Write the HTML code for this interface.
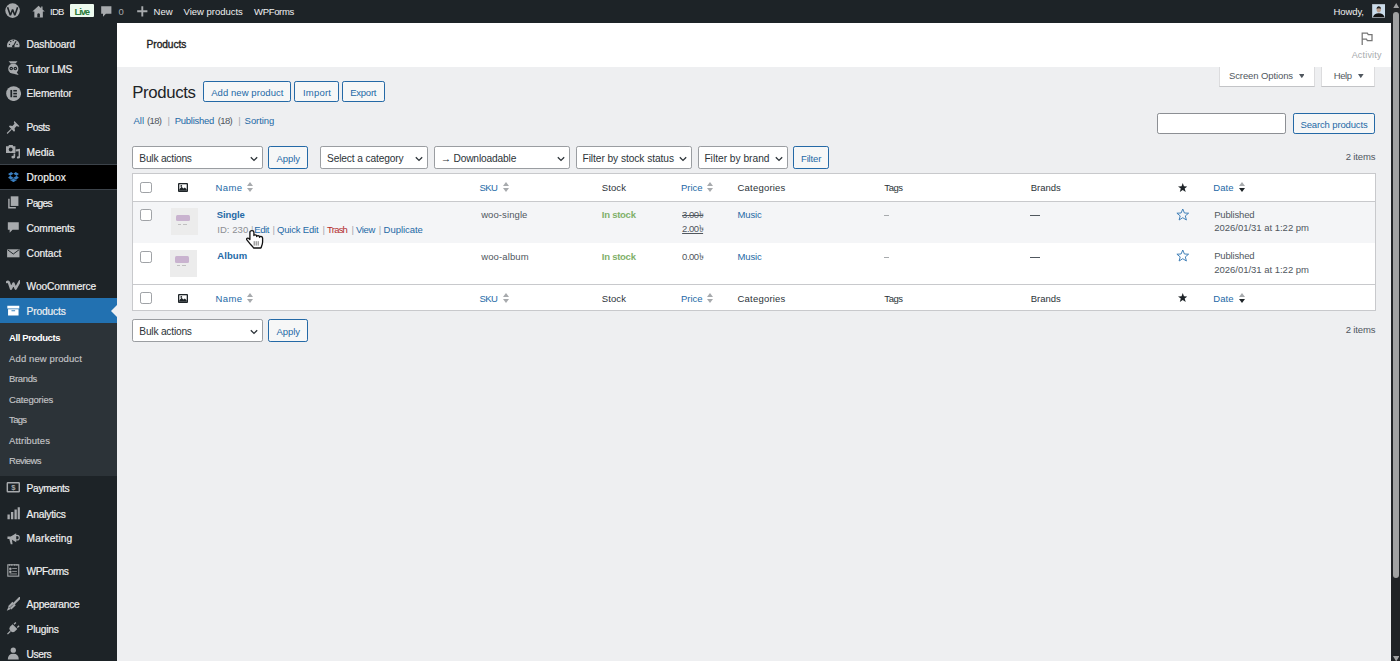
<!DOCTYPE html><html><head><meta charset="utf-8"><style>
html,body{margin:0;padding:0;}
body{width:1400px;height:661px;overflow:hidden;position:relative;background:#eeeff1;font-family:"Liberation Sans",sans-serif;}
.t{position:absolute;white-space:nowrap;}
.b{position:absolute;box-sizing:border-box;}
</style></head><body>
<div class="b" style="left:0px;top:0px;width:1391.00px;height:22.50px;background:#1d2327"></div>
<div class="b" style="left:0px;top:22px;width:116.70px;height:639.00px;background:#1d2327"></div>
<div class="b" style="left:0px;top:164px;width:116.70px;height:25.50px;background:#000;border-top:1px solid #3c434a;border-bottom:1px solid #3c434a"></div>
<div class="b" style="left:0px;top:298.4px;width:116.70px;height:24.30px;background:#2271b1"></div>
<div class="b" style="left:0px;top:322.7px;width:116.70px;height:153.00px;background:#2c3338"></div>
<div class="b" style="left:116.7px;top:22.5px;width:1274.30px;height:44.00px;background:#fff"></div>
<div class="b" style="left:1391px;top:0px;width:9.00px;height:661.00px;background:#202326"></div>
<div class="b" style="left:1392.7px;top:12px;width:6.40px;height:565.60px;background:#a0a1a2;border-radius:3.2px"></div>
<svg class="b" style="left:1392.7px;top:2.7px" width="6.4" height="5.5" viewBox="0 0 6.4 5.5"><path d="M3.2 0 L6.4 5.5 H0Z" fill="#a0a1a2"/></svg>
<svg class="b" style="left:1392.7px;top:655.5px" width="6.4" height="5.5" viewBox="0 0 6.4 5.5"><path d="M0 0 H6.4 L3.2 5.5Z" fill="#a0a1a2"/></svg>
<div class="t" style="left:50.00px;top:6.96px;font-size:9.5px;line-height:9.5px;color:#f0f0f1;letter-spacing:-0.759px;">IDB</div>
<div class="b" style="left:70px;top:4.3px;width:23.90px;height:13.20px;background:#edfaef;border-radius:1px"></div>
<div class="t" style="left:74.60px;top:6.96px;font-size:9.5px;line-height:9.5px;color:#2a7b3b;font-weight:700;letter-spacing:-1.200px;">Live</div>
<div class="t" style="left:118.60px;top:6.96px;font-size:9.5px;line-height:9.5px;color:#a7aaad;">0</div>
<div class="t" style="left:153.60px;top:6.96px;font-size:9.5px;line-height:9.5px;color:#f0f0f1;letter-spacing:-0.024px;">New</div>
<div class="t" style="left:183.60px;top:6.96px;font-size:9.5px;line-height:9.5px;color:#f0f0f1;letter-spacing:-0.018px;">View products</div>
<div class="t" style="left:254.00px;top:6.96px;font-size:9.5px;line-height:9.5px;color:#f0f0f1;letter-spacing:-0.321px;">WPForms</div>
<div class="t" style="left:1333.50px;top:6.96px;font-size:9.5px;line-height:9.5px;color:#f0f0f1;letter-spacing:-0.094px;">Howdy,</div>
<svg class="b" style="left:1371.5px;top:4.2px" width="13.5" height="13.5" viewBox="0 0 13.5 13.5"><rect x="0" y="0" width="13.5" height="13.5" fill="#c9dbea" stroke="#8c8f94" stroke-width="0.8"/><path d="M1 13 Q2 9.5 6.75 9.3 Q11.5 9.5 12.5 13Z" fill="#111"/><ellipse cx="6.75" cy="5.6" rx="2.2" ry="2.8" fill="#b89a88"/><path d="M4.5 4.8 Q4.6 2.2 6.75 2.3 Q9 2.2 9 4.8 Q7 3.6 4.5 4.8Z" fill="#222"/></svg>
<div class="t" style="left:26.60px;top:40.17px;font-size:10.2px;line-height:10.2px;color:#f0f0f1;letter-spacing:-0.147px;-webkit-text-stroke:0.2px #f0f0f1">Dashboard</div>
<div class="t" style="left:26.60px;top:64.67px;font-size:10.2px;line-height:10.2px;color:#f0f0f1;letter-spacing:-0.178px;-webkit-text-stroke:0.2px #f0f0f1">Tutor LMS</div>
<div class="t" style="left:26.60px;top:89.07px;font-size:10.2px;line-height:10.2px;color:#f0f0f1;letter-spacing:-0.139px;-webkit-text-stroke:0.2px #f0f0f1">Elementor</div>
<div class="t" style="left:26.60px;top:123.17px;font-size:10.2px;line-height:10.2px;color:#f0f0f1;letter-spacing:-0.525px;-webkit-text-stroke:0.2px #f0f0f1">Posts</div>
<div class="t" style="left:26.60px;top:147.87px;font-size:10.2px;line-height:10.2px;color:#f0f0f1;letter-spacing:-0.037px;-webkit-text-stroke:0.2px #f0f0f1">Media</div>
<div class="t" style="left:26.60px;top:172.97px;font-size:10.2px;line-height:10.2px;color:#f0f0f1;letter-spacing:0.107px;-webkit-text-stroke:0.2px #f0f0f1">Dropbox</div>
<div class="t" style="left:26.60px;top:199.27px;font-size:10.2px;line-height:10.2px;color:#f0f0f1;letter-spacing:-0.729px;-webkit-text-stroke:0.2px #f0f0f1">Pages</div>
<div class="t" style="left:26.60px;top:223.77px;font-size:10.2px;line-height:10.2px;color:#f0f0f1;letter-spacing:-0.145px;-webkit-text-stroke:0.2px #f0f0f1">Comments</div>
<div class="t" style="left:26.60px;top:249.17px;font-size:10.2px;line-height:10.2px;color:#f0f0f1;letter-spacing:-0.073px;-webkit-text-stroke:0.2px #f0f0f1">Contact</div>
<div class="t" style="left:26.60px;top:282.07px;font-size:10.2px;line-height:10.2px;color:#f0f0f1;letter-spacing:-0.089px;-webkit-text-stroke:0.2px #f0f0f1">WooCommerce</div>
<div class="t" style="left:26.60px;top:307.07px;font-size:10.2px;line-height:10.2px;color:#f0f0f1;letter-spacing:-0.148px;-webkit-text-stroke:0.2px #f0f0f1">Products</div>
<div class="t" style="left:26.60px;top:483.77px;font-size:10.2px;line-height:10.2px;color:#f0f0f1;letter-spacing:-0.334px;-webkit-text-stroke:0.2px #f0f0f1">Payments</div>
<div class="t" style="left:26.60px;top:509.87px;font-size:10.2px;line-height:10.2px;color:#f0f0f1;letter-spacing:-0.175px;-webkit-text-stroke:0.2px #f0f0f1">Analytics</div>
<div class="t" style="left:26.60px;top:534.47px;font-size:10.2px;line-height:10.2px;color:#f0f0f1;letter-spacing:0.115px;-webkit-text-stroke:0.2px #f0f0f1">Marketing</div>
<div class="t" style="left:26.60px;top:567.07px;font-size:10.2px;line-height:10.2px;color:#f0f0f1;letter-spacing:-0.490px;-webkit-text-stroke:0.2px #f0f0f1">WPForms</div>
<div class="t" style="left:26.60px;top:599.77px;font-size:10.2px;line-height:10.2px;color:#f0f0f1;letter-spacing:-0.203px;-webkit-text-stroke:0.2px #f0f0f1">Appearance</div>
<div class="t" style="left:26.60px;top:624.87px;font-size:10.2px;line-height:10.2px;color:#f0f0f1;letter-spacing:-0.176px;-webkit-text-stroke:0.2px #f0f0f1">Plugins</div>
<div class="t" style="left:26.60px;top:649.97px;font-size:10.2px;line-height:10.2px;color:#f0f0f1;letter-spacing:-0.431px;-webkit-text-stroke:0.2px #f0f0f1">Users</div>
<div class="t" style="left:9.10px;top:333.46px;font-size:9.5px;line-height:9.5px;color:#fff;font-weight:700;letter-spacing:-0.414px;">All Products</div>
<div class="t" style="left:9.10px;top:353.76px;font-size:9.5px;line-height:9.5px;color:#c3c4c7;letter-spacing:0.100px;-webkit-text-stroke:0.15px #c3c4c7">Add new product</div>
<div class="t" style="left:9.10px;top:374.26px;font-size:9.5px;line-height:9.5px;color:#c3c4c7;letter-spacing:-0.383px;-webkit-text-stroke:0.15px #c3c4c7">Brands</div>
<div class="t" style="left:9.10px;top:394.96px;font-size:9.5px;line-height:9.5px;color:#c3c4c7;letter-spacing:-0.193px;-webkit-text-stroke:0.15px #c3c4c7">Categories</div>
<div class="t" style="left:9.10px;top:415.26px;font-size:9.5px;line-height:9.5px;color:#c3c4c7;letter-spacing:-0.715px;-webkit-text-stroke:0.15px #c3c4c7">Tags</div>
<div class="t" style="left:9.10px;top:436.06px;font-size:9.5px;line-height:9.5px;color:#c3c4c7;letter-spacing:0.074px;-webkit-text-stroke:0.15px #c3c4c7">Attributes</div>
<div class="t" style="left:9.10px;top:455.96px;font-size:9.5px;line-height:9.5px;color:#c3c4c7;letter-spacing:-0.568px;-webkit-text-stroke:0.15px #c3c4c7">Reviews</div>
<svg class="b" style="left:110.7px;top:304.5px" width="6" height="12" viewBox="0 0 6 12"><path d="M6 0 L0 6 L6 12 Z" fill="#eeeff1"/></svg>
<div class="t" style="left:146.60px;top:40.37px;font-size:10.2px;line-height:10.2px;color:#1e1e1e;letter-spacing:-0.077px;-webkit-text-stroke:0.35px #1e1e1e">Products</div>
<div class="t" style="left:1351.70px;top:50.98px;font-size:9px;line-height:9px;color:#a7aaad;letter-spacing:0.174px;">Activity</div>
<div class="b" style="left:1218.8px;top:66.5px;width:96.10px;height:20.90px;background:#fff;border:1px solid #dcdcde;border-top:0;border-bottom-color:#c3c4c7"></div>
<div class="b" style="left:1321.4px;top:66.5px;width:54.10px;height:20.90px;background:#fff;border:1px solid #dcdcde;border-top:0;border-bottom-color:#c3c4c7"></div>
<div class="t" style="left:1229.00px;top:71.46px;font-size:9.5px;line-height:9.5px;color:#50575e;letter-spacing:-0.108px;">Screen Options</div>
<div class="t" style="left:1333.70px;top:71.46px;font-size:9.5px;line-height:9.5px;color:#50575e;letter-spacing:-0.408px;">Help</div>
<div class="t" style="left:132.30px;top:84.78px;font-size:16.8px;line-height:16.8px;color:#1d2327;letter-spacing:-0.368px;">Products</div>
<div class="b" style="left:203.3px;top:81.2px;width:87.80px;height:21.30px;background:#f6f7f7;border:1px solid #2469a6;border-radius:2.2px"></div>
<div class="b" style="left:294.3px;top:81.2px;width:44.50px;height:21.30px;background:#f6f7f7;border:1px solid #2469a6;border-radius:2.2px"></div>
<div class="b" style="left:342px;top:81.2px;width:42.80px;height:21.30px;background:#f6f7f7;border:1px solid #2469a6;border-radius:2.2px"></div>
<div class="t" style="left:211.20px;top:87.66px;font-size:9.5px;line-height:9.5px;color:#2469a6;letter-spacing:0.072px;">Add new product</div>
<div class="t" style="left:303.00px;top:87.66px;font-size:9.5px;line-height:9.5px;color:#2469a6;letter-spacing:0.213px;">Import</div>
<div class="t" style="left:350.20px;top:87.66px;font-size:9.5px;line-height:9.5px;color:#2469a6;letter-spacing:-0.231px;">Export</div>
<div class="t" style="left:133.50px;top:115.56px;font-size:9.5px;line-height:9.5px;color:#2469a6;letter-spacing:-0.022px;">All</div>
<div class="t" style="left:146.90px;top:115.56px;font-size:9.5px;line-height:9.5px;color:#50575e;letter-spacing:-0.603px;">(18)</div>
<div class="t" style="left:167.60px;top:115.56px;font-size:9.5px;line-height:9.5px;color:#a7aaad;">|</div>
<div class="t" style="left:174.80px;top:115.56px;font-size:9.5px;line-height:9.5px;color:#2469a6;letter-spacing:-0.276px;">Published</div>
<div class="t" style="left:217.70px;top:115.56px;font-size:9.5px;line-height:9.5px;color:#50575e;letter-spacing:-0.603px;">(18)</div>
<div class="t" style="left:238.30px;top:115.56px;font-size:9.5px;line-height:9.5px;color:#a7aaad;">|</div>
<div class="t" style="left:244.60px;top:115.56px;font-size:9.5px;line-height:9.5px;color:#2469a6;letter-spacing:-0.052px;">Sorting</div>
<div class="b" style="left:1157.2px;top:113.2px;width:128.60px;height:21.30px;background:#fff;border:1px solid #8c8f94;border-radius:2.2px"></div>
<div class="b" style="left:1292.6px;top:113.2px;width:82.80px;height:21.30px;background:#f6f7f7;border:1px solid #2469a6;border-radius:2.2px"></div>
<div class="t" style="left:1300.50px;top:119.56px;font-size:9.5px;line-height:9.5px;color:#2469a6;letter-spacing:-0.140px;">Search products</div>
<div class="b" style="left:132.4px;top:146.4px;width:130.90px;height:22.90px;background:#fff;border:1px solid #9a9da1;border-radius:2.2px"></div>
<div class="t" style="left:139.30px;top:153.97px;font-size:10.2px;line-height:10.2px;color:#2c3338;letter-spacing:-0.207px;">Bulk actions</div>
<svg class="b" style="left:249.5px;top:156.05px" width="8" height="6" viewBox="0 0 8 6"><path d="M0.8 1.2 L4 4.4 L7.2 1.2" fill="none" stroke="#2c3338" stroke-width="1.3"/></svg>
<div class="b" style="left:268.1px;top:146.4px;width:39.80px;height:22.90px;background:#f6f7f7;border:1px solid #2469a6;border-radius:2.2px"></div>
<div class="t" style="left:276.40px;top:153.86px;font-size:9.5px;line-height:9.5px;color:#2469a6;letter-spacing:-0.037px;">Apply</div>
<div class="b" style="left:320.4px;top:146.4px;width:108.00px;height:22.90px;background:#fff;border:1px solid #9a9da1;border-radius:2.2px"></div>
<div class="t" style="left:327.00px;top:153.97px;font-size:10.2px;line-height:10.2px;color:#2c3338;letter-spacing:-0.131px;">Select a category</div>
<svg class="b" style="left:414.8px;top:156.05px" width="8" height="6" viewBox="0 0 8 6"><path d="M0.8 1.2 L4 4.4 L7.2 1.2" fill="none" stroke="#2c3338" stroke-width="1.3"/></svg>
<div class="b" style="left:433.6px;top:146.4px;width:136.90px;height:22.90px;background:#fff;border:1px solid #9a9da1;border-radius:2.2px"></div>
<div class="t" style="left:440.70px;top:153.97px;font-size:10.2px;line-height:10.2px;color:#2c3338;letter-spacing:-0.144px;">→ Downloadable</div>
<svg class="b" style="left:556.8px;top:156.05px" width="8" height="6" viewBox="0 0 8 6"><path d="M0.8 1.2 L4 4.4 L7.2 1.2" fill="none" stroke="#2c3338" stroke-width="1.3"/></svg>
<div class="b" style="left:576.4px;top:146.4px;width:116.10px;height:22.90px;background:#fff;border:1px solid #9a9da1;border-radius:2.2px"></div>
<div class="t" style="left:582.50px;top:153.97px;font-size:10.2px;line-height:10.2px;color:#2c3338;letter-spacing:-0.065px;">Filter by stock status</div>
<svg class="b" style="left:679.2px;top:156.05px" width="8" height="6" viewBox="0 0 8 6"><path d="M0.8 1.2 L4 4.4 L7.2 1.2" fill="none" stroke="#2c3338" stroke-width="1.3"/></svg>
<div class="b" style="left:698.3px;top:146.4px;width:89.70px;height:22.90px;background:#fff;border:1px solid #9a9da1;border-radius:2.2px"></div>
<div class="t" style="left:704.40px;top:153.97px;font-size:10.2px;line-height:10.2px;color:#2c3338;">Filter by brand</div>
<svg class="b" style="left:774.6px;top:156.05px" width="8" height="6" viewBox="0 0 8 6"><path d="M0.8 1.2 L4 4.4 L7.2 1.2" fill="none" stroke="#2c3338" stroke-width="1.3"/></svg>
<div class="b" style="left:792.8px;top:146.4px;width:36.20px;height:22.90px;background:#f6f7f7;border:1px solid #2469a6;border-radius:2.2px"></div>
<div class="t" style="left:801.00px;top:153.86px;font-size:9.5px;line-height:9.5px;color:#2469a6;letter-spacing:-0.158px;">Filter</div>
<div class="t" style="left:1345.80px;top:152.16px;font-size:9.5px;line-height:9.5px;color:#50575e;letter-spacing:-0.173px;">2 items</div>
<div class="b" style="left:132px;top:173.3px;width:1243.50px;height:138.20px;background:#fff;border:1px solid #c8c9cc"></div>
<div class="b" style="left:132px;top:200.5px;width:1243.50px;height:1.00px;background:#c8c9cc"></div>
<div class="b" style="left:133px;top:201.5px;width:1241.50px;height:41.30px;background:#f4f5f7"></div>
<div class="b" style="left:132px;top:284.2px;width:1243.50px;height:1.00px;background:#c8c9cc"></div>
<div class="b" style="left:140.3px;top:181.6px;width:11.70px;height:11.70px;background:#fff;border:1px solid #9fa2a6;border-radius:2.2px"></div>
<svg class="b" style="left:178px;top:183px" width="10" height="9" viewBox="0 0 10 9"><rect x="0" y="0" width="10" height="9" rx="1" fill="#1d2327"/><rect x="1.3" y="1.3" width="7.4" height="6.4" fill="#fff"/><path d="M1.3 7.7 V6.2 L3.6 3.8 L5.4 5.6 L6.8 4.4 L8.7 6.2 V7.7Z" fill="#1d2327"/><circle cx="3.3" cy="2.9" r="0.9" fill="#1d2327"/></svg>
<div class="t" style="left:215.50px;top:182.96px;font-size:9.5px;line-height:9.5px;color:#2469a6;letter-spacing:0.378px;">Name</div>
<svg class="b" style="left:246.8px;top:182px" width="6" height="10" viewBox="0 0 6 10"><path d="M3 0 L6 4 L0 4Z" fill="#a7aaad"/><path d="M0 6 L6 6 L3 10Z" fill="#a7aaad"/></svg>
<div class="t" style="left:479.60px;top:182.96px;font-size:9.5px;line-height:9.5px;color:#2469a6;letter-spacing:-0.611px;">SKU</div>
<svg class="b" style="left:503px;top:182px" width="6" height="10" viewBox="0 0 6 10"><path d="M3 0 L6 4 L0 4Z" fill="#a7aaad"/><path d="M0 6 L6 6 L3 10Z" fill="#a7aaad"/></svg>
<div class="t" style="left:601.80px;top:182.96px;font-size:9.5px;line-height:9.5px;color:#2c3338;letter-spacing:0.101px;">Stock</div>
<div class="t" style="left:681.00px;top:182.96px;font-size:9.5px;line-height:9.5px;color:#2469a6;letter-spacing:-0.040px;">Price</div>
<svg class="b" style="left:706.5px;top:182px" width="6" height="10" viewBox="0 0 6 10"><path d="M3 0 L6 4 L0 4Z" fill="#a7aaad"/><path d="M0 6 L6 6 L3 10Z" fill="#a7aaad"/></svg>
<div class="t" style="left:737.50px;top:182.96px;font-size:9.5px;line-height:9.5px;color:#2c3338;letter-spacing:0.207px;">Categories</div>
<div class="t" style="left:884.30px;top:182.96px;font-size:9.5px;line-height:9.5px;color:#2c3338;letter-spacing:-0.415px;">Tags</div>
<div class="t" style="left:1030.70px;top:182.96px;font-size:9.5px;line-height:9.5px;color:#2c3338;letter-spacing:-0.023px;">Brands</div>
<svg class="b" style="left:1177.5px;top:182.5px" width="9.5" height="9" viewBox="0 0 9.5 9"><path d="M4.75 0 L5.95 3.3 L9.5 3.4 L6.7 5.6 L7.7 9 L4.75 7 L1.8 9 L2.8 5.6 L0 3.4 L3.55 3.3Z" fill="#1d2327"/></svg>
<div class="t" style="left:1213.30px;top:182.96px;font-size:9.5px;line-height:9.5px;color:#2469a6;letter-spacing:0.085px;">Date</div>
<svg class="b" style="left:1238.5px;top:182px" width="6" height="10" viewBox="0 0 6 10"><path d="M3 0 L6 4 L0 4Z" fill="#a7aaad"/><path d="M0 6 L6 6 L3 10Z" fill="#1d2327"/></svg>
<div class="b" style="left:140.3px;top:292.4px;width:11.70px;height:11.70px;background:#fff;border:1px solid #9fa2a6;border-radius:2.2px"></div>
<svg class="b" style="left:178px;top:293.7px" width="10" height="9" viewBox="0 0 10 9"><rect x="0" y="0" width="10" height="9" rx="1" fill="#1d2327"/><rect x="1.3" y="1.3" width="7.4" height="6.4" fill="#fff"/><path d="M1.3 7.7 V6.2 L3.6 3.8 L5.4 5.6 L6.8 4.4 L8.7 6.2 V7.7Z" fill="#1d2327"/><circle cx="3.3" cy="2.9" r="0.9" fill="#1d2327"/></svg>
<div class="t" style="left:215.50px;top:293.66px;font-size:9.5px;line-height:9.5px;color:#2469a6;letter-spacing:0.378px;">Name</div>
<svg class="b" style="left:246.8px;top:292.7px" width="6" height="10" viewBox="0 0 6 10"><path d="M3 0 L6 4 L0 4Z" fill="#a7aaad"/><path d="M0 6 L6 6 L3 10Z" fill="#a7aaad"/></svg>
<div class="t" style="left:479.60px;top:293.66px;font-size:9.5px;line-height:9.5px;color:#2469a6;letter-spacing:-0.611px;">SKU</div>
<svg class="b" style="left:503px;top:292.7px" width="6" height="10" viewBox="0 0 6 10"><path d="M3 0 L6 4 L0 4Z" fill="#a7aaad"/><path d="M0 6 L6 6 L3 10Z" fill="#a7aaad"/></svg>
<div class="t" style="left:601.80px;top:293.66px;font-size:9.5px;line-height:9.5px;color:#2c3338;letter-spacing:0.101px;">Stock</div>
<div class="t" style="left:681.00px;top:293.66px;font-size:9.5px;line-height:9.5px;color:#2469a6;letter-spacing:-0.040px;">Price</div>
<svg class="b" style="left:706.5px;top:292.7px" width="6" height="10" viewBox="0 0 6 10"><path d="M3 0 L6 4 L0 4Z" fill="#a7aaad"/><path d="M0 6 L6 6 L3 10Z" fill="#a7aaad"/></svg>
<div class="t" style="left:737.50px;top:293.66px;font-size:9.5px;line-height:9.5px;color:#2c3338;letter-spacing:0.207px;">Categories</div>
<div class="t" style="left:884.30px;top:293.66px;font-size:9.5px;line-height:9.5px;color:#2c3338;letter-spacing:-0.415px;">Tags</div>
<div class="t" style="left:1030.70px;top:293.66px;font-size:9.5px;line-height:9.5px;color:#2c3338;letter-spacing:-0.023px;">Brands</div>
<svg class="b" style="left:1177.5px;top:293.2px" width="9.5" height="9" viewBox="0 0 9.5 9"><path d="M4.75 0 L5.95 3.3 L9.5 3.4 L6.7 5.6 L7.7 9 L4.75 7 L1.8 9 L2.8 5.6 L0 3.4 L3.55 3.3Z" fill="#1d2327"/></svg>
<div class="t" style="left:1213.30px;top:293.66px;font-size:9.5px;line-height:9.5px;color:#2469a6;letter-spacing:0.085px;">Date</div>
<svg class="b" style="left:1238.5px;top:292.7px" width="6" height="10" viewBox="0 0 6 10"><path d="M3 0 L6 4 L0 4Z" fill="#a7aaad"/><path d="M0 6 L6 6 L3 10Z" fill="#1d2327"/></svg>
<div class="b" style="left:140.3px;top:209.2px;width:11.70px;height:11.70px;background:#fff;border:1px solid #9fa2a6;border-radius:2.2px"></div>
<div class="b" style="left:171px;top:208px;width:27.00px;height:27.00px;background:#ececec"></div>
<div class="b" style="left:176px;top:214.5px;width:14.00px;height:6.50px;background:#c9b3cf;border-radius:1.5px"></div>
<div class="b" style="left:178px;top:223.5px;width:3.00px;height:1.00px;background:#c0c0c0"></div>
<div class="b" style="left:183px;top:223.5px;width:4.00px;height:1.00px;background:#c0c0c0"></div>
<div class="t" style="left:216.80px;top:209.66px;font-size:9.5px;line-height:9.5px;color:#2469a6;font-weight:700;letter-spacing:-0.100px;">Single</div>
<div class="t" style="left:217.20px;top:225.46px;font-size:9.5px;line-height:9.5px;color:#8c8f94;letter-spacing:0.060px;">ID: 230</div>
<div class="t" style="left:251.00px;top:225.46px;font-size:9.5px;line-height:9.5px;color:#a7aaad;">|</div>
<div class="t" style="left:254.30px;top:225.46px;font-size:9.5px;line-height:9.5px;color:#2469a6;letter-spacing:-0.462px;">Edit</div>
<div class="t" style="left:272.50px;top:225.46px;font-size:9.5px;line-height:9.5px;color:#a7aaad;">|</div>
<div class="t" style="left:277.10px;top:225.46px;font-size:9.5px;line-height:9.5px;color:#2469a6;letter-spacing:-0.197px;">Quick Edit</div>
<div class="t" style="left:322.50px;top:225.46px;font-size:9.5px;line-height:9.5px;color:#a7aaad;">|</div>
<div class="t" style="left:327.10px;top:225.46px;font-size:9.5px;line-height:9.5px;color:#b32d2e;letter-spacing:-0.785px;">Trash</div>
<div class="t" style="left:351.50px;top:225.46px;font-size:9.5px;line-height:9.5px;color:#a7aaad;">|</div>
<div class="t" style="left:356.00px;top:225.46px;font-size:9.5px;line-height:9.5px;color:#2469a6;letter-spacing:-0.342px;">View</div>
<div class="t" style="left:378.80px;top:225.46px;font-size:9.5px;line-height:9.5px;color:#a7aaad;">|</div>
<div class="t" style="left:383.60px;top:225.46px;font-size:9.5px;line-height:9.5px;color:#2469a6;letter-spacing:-0.039px;">Duplicate</div>
<div class="t" style="left:481.15px;top:210.16px;font-size:9.5px;line-height:9.5px;color:#50575e;letter-spacing:0.094px;">woo-single</div>
<div class="t" style="left:601.80px;top:210.16px;font-size:9.5px;line-height:9.5px;color:#7fb069;font-weight:700;letter-spacing:-0.251px;">In stock</div>
<div class="t" style="left:682.10px;top:210.16px;font-size:9.5px;line-height:9.5px;color:#50575e;letter-spacing:-0.501px;text-decoration:line-through">3.00৳</div>
<div class="t" style="left:682.10px;top:224.06px;font-size:9.5px;line-height:9.5px;color:#50575e;letter-spacing:-0.501px;text-decoration:underline">2.00৳</div>
<div class="t" style="left:737.40px;top:210.16px;font-size:9.5px;line-height:9.5px;color:#2469a6;letter-spacing:-0.099px;">Music</div>
<div class="b" style="left:884px;top:214.6px;width:5.00px;height:1.00px;background:#a7aaad"></div>
<div class="b" style="left:1030px;top:214.8px;width:9.70px;height:1.00px;background:#50575e"></div>
<svg class="b" style="left:1175.7px;top:207.8px" width="13.5" height="13" viewBox="0 0 13.5 13"><path d="M6.75 1 L8.4 5 L12.6 5.2 L9.3 7.9 L10.4 12 L6.75 9.7 L3.1 12 L4.2 7.9 L0.9 5.2 L5.1 5Z" fill="none" stroke="#3a7bb5" stroke-width="0.95" stroke-linejoin="round"/></svg>
<div class="t" style="left:1214.20px;top:209.56px;font-size:9.5px;line-height:9.5px;color:#50575e;letter-spacing:-0.163px;">Published</div>
<div class="t" style="left:1214.20px;top:223.36px;font-size:9.5px;line-height:9.5px;color:#50575e;letter-spacing:-0.015px;">2026/01/31 at 1:22 pm</div>
<div class="b" style="left:140.3px;top:251.2px;width:11.70px;height:11.70px;background:#fff;border:1px solid #9fa2a6;border-radius:2.2px"></div>
<div class="b" style="left:170px;top:249.5px;width:27.00px;height:27.00px;background:#ececec"></div>
<div class="b" style="left:175px;top:256.0px;width:14.00px;height:6.50px;background:#c9b3cf;border-radius:1.5px"></div>
<div class="b" style="left:177px;top:265.0px;width:3.00px;height:1.00px;background:#c0c0c0"></div>
<div class="b" style="left:182px;top:265.0px;width:4.00px;height:1.00px;background:#c0c0c0"></div>
<div class="t" style="left:217.20px;top:251.36px;font-size:9.5px;line-height:9.5px;color:#2469a6;font-weight:700;letter-spacing:0.114px;">Album</div>
<div class="t" style="left:481.15px;top:251.56px;font-size:9.5px;line-height:9.5px;color:#50575e;letter-spacing:0.125px;">woo-album</div>
<div class="t" style="left:601.80px;top:251.56px;font-size:9.5px;line-height:9.5px;color:#7fb069;font-weight:700;letter-spacing:-0.251px;">In stock</div>
<div class="t" style="left:682.10px;top:251.56px;font-size:9.5px;line-height:9.5px;color:#50575e;letter-spacing:-0.501px;">0.00৳</div>
<div class="t" style="left:737.40px;top:251.56px;font-size:9.5px;line-height:9.5px;color:#2469a6;letter-spacing:-0.099px;">Music</div>
<div class="b" style="left:884px;top:256.6px;width:5.00px;height:1.00px;background:#a7aaad"></div>
<div class="b" style="left:1030px;top:256.8px;width:9.70px;height:1.00px;background:#50575e"></div>
<svg class="b" style="left:1175.7px;top:249.4px" width="13.5" height="13" viewBox="0 0 13.5 13"><path d="M6.75 1 L8.4 5 L12.6 5.2 L9.3 7.9 L10.4 12 L6.75 9.7 L3.1 12 L4.2 7.9 L0.9 5.2 L5.1 5Z" fill="none" stroke="#3a7bb5" stroke-width="0.95" stroke-linejoin="round"/></svg>
<div class="t" style="left:1214.20px;top:251.36px;font-size:9.5px;line-height:9.5px;color:#50575e;letter-spacing:-0.163px;">Published</div>
<div class="t" style="left:1214.20px;top:265.06px;font-size:9.5px;line-height:9.5px;color:#50575e;letter-spacing:-0.015px;">2026/01/31 at 1:22 pm</div>
<div class="b" style="left:132.4px;top:319.3px;width:130.90px;height:23.10px;background:#fff;border:1px solid #9a9da1;border-radius:2.2px"></div>
<div class="t" style="left:139.30px;top:327.27px;font-size:10.2px;line-height:10.2px;color:#2c3338;letter-spacing:-0.207px;">Bulk actions</div>
<svg class="b" style="left:249.5px;top:329.05px" width="8" height="6" viewBox="0 0 8 6"><path d="M0.8 1.2 L4 4.4 L7.2 1.2" fill="none" stroke="#2c3338" stroke-width="1.3"/></svg>
<div class="b" style="left:268.1px;top:319.3px;width:39.80px;height:23.10px;background:#f6f7f7;border:1px solid #2469a6;border-radius:2.2px"></div>
<div class="t" style="left:276.40px;top:327.16px;font-size:9.5px;line-height:9.5px;color:#2469a6;letter-spacing:-0.037px;">Apply</div>
<div class="t" style="left:1345.80px;top:325.26px;font-size:9.5px;line-height:9.5px;color:#50575e;letter-spacing:-0.173px;">2 items</div>
<svg class="b" style="left:4.90px;top:3.20px" width="15.2" height="15.2" viewBox="0 0 20 20"><circle cx="10" cy="10" r="9.6" fill="#a7aaad"/><path d="M3.4 5.6 L7.1 16.2 L10 8.6 L12.9 16.2 L16.6 5.6" fill="none" stroke="#1d2327" stroke-width="2.1" stroke-linejoin="bevel"/></svg>
<svg class="b" style="left:30.50px;top:3.50px" width="15.2" height="15.2" viewBox="0 0 20 20"><path d="M10 2.2 L1.8 10 H4.4 V17.8 H15.6 V10 H18.2 L15.2 7.2 V3.2 H13.4 V5.5Z" fill="#a7aaad"/><path d="M8.3 17.8 V13.2 Q10 11.3 11.7 13.2 V17.8Z" fill="#1d2327"/></svg>
<svg class="b" style="left:99.10px;top:3.90px" width="14.6" height="14.6" viewBox="0 0 20 20"><path d="M3 3 H17 V13.5 H9.5 L5.5 17.5 V13.5 H3Z" fill="#a7aaad"/></svg>
<svg class="b" style="left:134.70px;top:3.90px" width="14.6" height="14.6" viewBox="0 0 20 20"><path d="M10 3 V17 M3 10 H17" stroke="#a7aaad" stroke-width="2.6"/></svg>
<svg class="b" style="left:5.90px;top:36.30px" width="14.6" height="14.6" viewBox="0 0 20 20"><path d="M1.8 15.5 A8.6 8.6 0 1 1 18.2 15.5 Z" fill="#a7aaad"/><path d="M10 14 L13.8 7.2" stroke="#1d2327" stroke-width="1.5"/><circle cx="10" cy="14" r="1.6" fill="#1d2327"/><circle cx="4.8" cy="11.5" r="0.9" fill="#1d2327"/><circle cx="6.5" cy="7.5" r="0.9" fill="#1d2327"/><circle cx="10" cy="5.8" r="0.9" fill="#1d2327"/><circle cx="15.2" cy="11.5" r="0.9" fill="#1d2327"/></svg>
<svg class="b" style="left:6.05px;top:60.60px" width="14.6" height="14.6" viewBox="0 0 20 20"><path d="M3.6 0.4 H15.8 L13 3.4 H6.4Z" fill="#a7aaad"/><circle cx="10" cy="10.6" r="7" fill="#a7aaad"/><path d="M14.5 15 L17.3 19.2 L10 17.6Z" fill="#a7aaad"/><circle cx="7.2" cy="10.4" r="2.4" fill="#1d2327"/><circle cx="12.8" cy="10.4" r="2.4" fill="#1d2327"/><circle cx="7.2" cy="10.4" r="0.9" fill="#a7aaad"/><circle cx="12.8" cy="10.4" r="0.9" fill="#a7aaad"/></svg>
<svg class="b" style="left:5.60px;top:85.65px" width="15.2" height="15.2" viewBox="0 0 20 20"><circle cx="10" cy="10" r="9.8" fill="#a7aaad"/><rect x="5.8" y="5.2" width="2.3" height="9.6" fill="#1d2327"/><rect x="9.6" y="5.2" width="4.8" height="2.1" fill="#1d2327"/><rect x="9.6" y="8.95" width="4.8" height="2.1" fill="#1d2327"/><rect x="9.6" y="12.7" width="4.8" height="2.1" fill="#1d2327"/></svg>
<svg class="b" style="left:5.70px;top:119.50px" width="14.6" height="14.6" viewBox="0 0 20 20"><path d="M11.5 1.5 L18.5 8.5 L16.8 9.3 L14.7 8.3 L11.8 11.2 L12.3 14.8 L11 16 L4 9 L5.2 7.7 L8.8 8.2 L11.7 5.3 L10.7 3.2Z" fill="#a7aaad"/><path d="M1.5 18.5 L7.5 12.5" stroke="#a7aaad" stroke-width="1.6"/></svg>
<svg class="b" style="left:5px;top:144px" width="16" height="16" viewBox="0 0 16 16"><path d="M1 2.2 H3.3 L4 1 H7.6 L8.3 2.2 H10.4 V9 H1Z" fill="#a7aaad"/><circle cx="5.7" cy="5.5" r="1.9" fill="#1d2327"/><path d="M10.6 5.6 L15 4.8 V13.6 Q15 14.6 13.4 14.6 Q11.8 14.6 11.8 13.4 Q11.8 12.2 13.6 12.2 V7.2 L10.6 7.6Z" fill="#a7aaad"/><path d="M8.6 9.6 H10.2 V12.8 Q10.2 14.6 8.2 14.6 Q6.4 14.6 6.4 13.1 Q6.4 11.6 8.6 11.8Z" fill="#a7aaad"/></svg>
<svg class="b" style="left:7.9px;top:171.9px" width="10.9" height="10.3" viewBox="0 0 42.5 40"><path d="M12.5 0 L0 8.1 L8.7 15 L21.2 7.2Z M0 21.9 L12.5 30 L21.2 22.8 L8.7 15Z M21.2 22.8 L30 30 L42.5 21.9 L33.8 15Z M42.5 8.1 L30 0 L21.2 7.2 L33.8 15Z M21.3 24.4 L12.5 31.7 L8.8 29.2 V32 L21.3 39.5 L33.8 32 V29.2 L30 31.7Z" fill="#3a7fc1"/></svg>
<svg class="b" style="left:6.40px;top:195.40px" width="14.6" height="14.6" viewBox="0 0 20 20"><path d="M6.5 1.8 H17 V15 H6.5Z" fill="#a7aaad"/><path d="M3 5 H5 V16.5 H13.5 V18.5 H3Z" fill="#a7aaad"/></svg>
<svg class="b" style="left:6.40px;top:220.10px" width="14.6" height="14.6" viewBox="0 0 20 20"><path d="M2.5 3 H17.5 V13.5 H9 L5 17.5 V13.5 H2.5Z" fill="#a7aaad"/></svg>
<svg class="b" style="left:6.15px;top:245.60px" width="14.6" height="14.6" viewBox="0 0 20 20"><path d="M1.5 4.5 H18.5 V15.5 H1.5Z" fill="#a7aaad"/><path d="M2.2 5.2 L10 11 L17.8 5.2" fill="none" stroke="#1d2327" stroke-width="1.3"/></svg>
<svg class="b" style="left:5.90px;top:278.40px" width="14.6" height="14.6" viewBox="0 0 20 20"><path d="M1.3 5.6 Q2.6 4.4 3.8 5.8 L6.8 14.6 L10.2 7.4 L13.2 14.6 L18.8 4.6" fill="none" stroke="#a7aaad" stroke-width="3.3" stroke-linecap="round" stroke-linejoin="round"/></svg>
<svg class="b" style="left:5.95px;top:303.40px" width="14.6" height="14.6" viewBox="0 0 20 20"><path d="M1.8 3.8 H18.2 V7.6 H1.8Z M2.8 8.6 H17.2 V17 H2.8Z" fill="#fff"/><path d="M7.5 10.6 H12.5" stroke="#2271b1" stroke-width="1.2"/></svg>
<svg class="b" style="left:5.60px;top:480.30px" width="14.6" height="14.6" viewBox="0 0 20 20"><rect x="1.8" y="3.9" width="16.4" height="12.2" rx="0.8" fill="none" stroke="#a7aaad" stroke-width="2"/><text x="10" y="14.2" text-anchor="middle" font-family="Liberation Sans" font-weight="700" font-size="10.5" fill="#a7aaad">$</text></svg>
<svg class="b" style="left:6.30px;top:506.20px" width="14.6" height="14.6" viewBox="0 0 20 20"><path d="M2 11.5 H5.2 V18 H2Z M6.8 8.2 H10 V18 H6.8Z M11.6 4.8 H14.8 V18 H11.6Z M16 1.8 H19 V18 H16Z" fill="#a7aaad"/></svg>
<svg class="b" style="left:5.60px;top:530.70px" width="14.6" height="14.6" viewBox="0 0 20 20"><path d="M2 7.5 H6.5 L14 3 V15.5 L6.5 11 H2Z" fill="#a7aaad"/><circle cx="15" cy="9.2" r="3.2" fill="none" stroke="#a7aaad" stroke-width="1.5"/><path d="M4.5 11 L6.5 18 H9 L8 11Z" fill="#a7aaad"/></svg>
<svg class="b" style="left:6.30px;top:563.30px" width="14.6" height="14.6" viewBox="0 0 20 20"><rect x="2.5" y="2.5" width="15" height="15.5" fill="none" stroke="#a7aaad" stroke-width="1.5"/><path d="M5 1.5 V4 M8 1.5 V4 M12 1.5 V4 M15 1.5 V4" stroke="#a7aaad" stroke-width="1.1"/><path d="M5 7 H7 V9 H5Z M5 11 H7 V13 H5Z M8.5 7.5 H15 M8.5 11.5 H15 M5 15 H15" stroke="#a7aaad" stroke-width="1.1" fill="#a7aaad"/></svg>
<svg class="b" style="left:5.70px;top:596.70px" width="14.6" height="14.6" viewBox="0 0 20 20"><path d="M11.5 8.5 L18.6 1.4" stroke="#a7aaad" stroke-width="3" stroke-linecap="round"/><path d="M8.8 6.6 L13.4 11.2 L7.4 17.2 L2.8 12.6Z" fill="#a7aaad"/><path d="M3.6 13.4 L6.6 16.4 L1 19Z" fill="#a7aaad"/><path d="M9.6 10.4 L5.2 14.8" stroke="#1d2327" stroke-width="0.8"/></svg>
<svg class="b" style="left:5.70px;top:621.10px" width="14.6" height="14.6" viewBox="0 0 20 20"><path d="M13.5 2 L11 4.5 M18 6.5 L15.5 9" stroke="#a7aaad" stroke-width="1.8"/><path d="M9 4.5 L15.5 11 L12 14.5 Q9.5 16.5 7 14.5 L5.5 13 Q3.5 10.5 5.5 8Z" fill="#a7aaad"/><path d="M6 14 L2 18" stroke="#a7aaad" stroke-width="1.8"/></svg>
<svg class="b" style="left:5.70px;top:646.20px" width="14.6" height="14.6" viewBox="0 0 20 20"><circle cx="10" cy="5.8" r="3.6" fill="#a7aaad"/><path d="M2.5 18.5 Q2.5 10.5 10 10.5 Q17.5 10.5 17.5 18.5Z" fill="#a7aaad"/></svg>
<svg class="b" style="left:1360.8px;top:31.8px" width="12" height="13.5" viewBox="0 0 12 13.5"><path d="M1.2 13.2 V1 H6.3 L7.2 2.6 H11 V8.6 H6.3 L5.4 7 H1.2" fill="none" stroke="#757575" stroke-width="1.25" stroke-linejoin="miter"/></svg>
<svg class="b" style="left:1298.6px;top:74px" width="5.6" height="4.2" viewBox="0 0 6 4" preserveAspectRatio="none"><path d="M0 0 H6 L3 4Z" fill="#50575e"/></svg>
<svg class="b" style="left:1358px;top:74px" width="5.6" height="4.2" viewBox="0 0 6 4" preserveAspectRatio="none"><path d="M0 0 H6 L3 4Z" fill="#50575e"/></svg>
<svg class="b" style="left:246px;top:229.5px" width="19" height="19.5" viewBox="0 0 19 19.5"><path d="M3.9 2.2 C3.9 0.2 7.9 0.2 7.9 2.2 V5.6 C7.9 4.5 10.7 4.5 10.7 5.9 V6.5 C10.7 5.3 13.5 5.3 13.5 6.7 V7.3 C13.5 6.1 16.6 6.2 16.6 7.9 V12 C16.6 14.6 15.6 16.2 14.9 18 H7.6 C6.9 16.6 4.6 14.6 3.3 12.8 L0.9 9.9 C0.1 8.7 1.7 7.4 2.9 8.5 L3.9 9.6 Z" fill="#fff" stroke="#111" stroke-width="1.3" stroke-linejoin="round"/><path d="M8.2 11.2 V15.6 M10.2 11.2 V15.6 M12.2 11.2 V15.6" stroke="#777" stroke-width="1"/></svg>
</body></html>
